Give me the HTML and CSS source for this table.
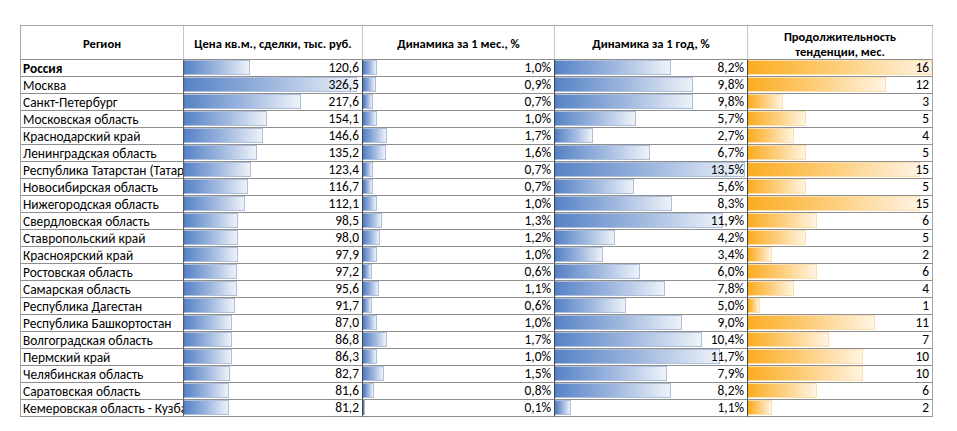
FILE: index.html
```html
<!DOCTYPE html>
<html lang="ru">
<head>
<meta charset="utf-8">
<title>Цены на жильё по регионам</title>
<link rel="stylesheet" href="styles.css">
</head>
<body>
<div class="sheet">
  <div class="cell head">Регион</div>
  <div class="cell head">Цена кв.м., сделки, тыс. руб.</div>
  <div class="cell head">Динамика за 1 мес., %</div>
  <div class="cell head">Динамика за 1 год, %</div>
  <div class="cell head">Продолжительность<br>тенденции, мес.</div>

  <div class="cell name strong">Россия</div>
  <div class="cell val"><span class="bar blue" style="width:66px"></span><span class="num">120,6</span></div>
  <div class="cell val"><span class="bar blue" style="width:14px"></span><span class="num">1,0%</span></div>
  <div class="cell val"><span class="bar blue" style="width:116px"></span><span class="num">8,2%</span></div>
  <div class="cell val last"><span class="bar orange" style="width:184px"></span><span class="num">16</span></div>

  <div class="cell name">Москва</div>
  <div class="cell val"><span class="bar blue" style="width:173px"></span><span class="num">326,5</span></div>
  <div class="cell val"><span class="bar blue" style="width:13px"></span><span class="num">0,9%</span></div>
  <div class="cell val"><span class="bar blue" style="width:138px"></span><span class="num">9,8%</span></div>
  <div class="cell val last"><span class="bar orange" style="width:138px"></span><span class="num">12</span></div>

  <div class="cell name">Санкт-Петербург</div>
  <div class="cell val"><span class="bar blue" style="width:117px"></span><span class="num">217,6</span></div>
  <div class="cell val"><span class="bar blue" style="width:10px"></span><span class="num">0,7%</span></div>
  <div class="cell val"><span class="bar blue" style="width:138px"></span><span class="num">9,8%</span></div>
  <div class="cell val last"><span class="bar orange" style="width:35px"></span><span class="num">3</span></div>

  <div class="cell name">Московская область</div>
  <div class="cell val"><span class="bar blue" style="width:83px"></span><span class="num">154,1</span></div>
  <div class="cell val"><span class="bar blue" style="width:14px"></span><span class="num">1,0%</span></div>
  <div class="cell val"><span class="bar blue" style="width:81px"></span><span class="num">5,7%</span></div>
  <div class="cell val last"><span class="bar orange" style="width:58px"></span><span class="num">5</span></div>

  <div class="cell name">Краснодарский край</div>
  <div class="cell val"><span class="bar blue" style="width:79px"></span><span class="num">146,6</span></div>
  <div class="cell val"><span class="bar blue" style="width:24px"></span><span class="num">1,7%</span></div>
  <div class="cell val"><span class="bar blue" style="width:38px"></span><span class="num">2,7%</span></div>
  <div class="cell val last"><span class="bar orange" style="width:46px"></span><span class="num">4</span></div>

  <div class="cell name">Ленинградская область</div>
  <div class="cell val"><span class="bar blue" style="width:73px"></span><span class="num">135,2</span></div>
  <div class="cell val"><span class="bar blue" style="width:23px"></span><span class="num">1,6%</span></div>
  <div class="cell val"><span class="bar blue" style="width:95px"></span><span class="num">6,7%</span></div>
  <div class="cell val last"><span class="bar orange" style="width:58px"></span><span class="num">5</span></div>

  <div class="cell name">Республика Татарстан (Татарстан)</div>
  <div class="cell val"><span class="bar blue" style="width:67px"></span><span class="num">123,4</span></div>
  <div class="cell val"><span class="bar blue" style="width:10px"></span><span class="num">0,7%</span></div>
  <div class="cell val"><span class="bar blue" style="width:190px"></span><span class="num">13,5%</span></div>
  <div class="cell val last"><span class="bar orange" style="width:172px"></span><span class="num">15</span></div>

  <div class="cell name">Новосибирская область</div>
  <div class="cell val"><span class="bar blue" style="width:64px"></span><span class="num">116,7</span></div>
  <div class="cell val"><span class="bar blue" style="width:10px"></span><span class="num">0,7%</span></div>
  <div class="cell val"><span class="bar blue" style="width:79px"></span><span class="num">5,6%</span></div>
  <div class="cell val last"><span class="bar orange" style="width:58px"></span><span class="num">5</span></div>

  <div class="cell name">Нижегородская область</div>
  <div class="cell val"><span class="bar blue" style="width:61px"></span><span class="num">112,1</span></div>
  <div class="cell val"><span class="bar blue" style="width:14px"></span><span class="num">1,0%</span></div>
  <div class="cell val"><span class="bar blue" style="width:117px"></span><span class="num">8,3%</span></div>
  <div class="cell val last"><span class="bar orange" style="width:172px"></span><span class="num">15</span></div>

  <div class="cell name">Свердловская область</div>
  <div class="cell val"><span class="bar blue" style="width:54px"></span><span class="num">98,5</span></div>
  <div class="cell val"><span class="bar blue" style="width:19px"></span><span class="num">1,3%</span></div>
  <div class="cell val"><span class="bar blue" style="width:168px"></span><span class="num">11,9%</span></div>
  <div class="cell val last"><span class="bar orange" style="width:69px"></span><span class="num">6</span></div>

  <div class="cell name">Ставропольский край</div>
  <div class="cell val"><span class="bar blue" style="width:54px"></span><span class="num">98,0</span></div>
  <div class="cell val"><span class="bar blue" style="width:17px"></span><span class="num">1,2%</span></div>
  <div class="cell val"><span class="bar blue" style="width:60px"></span><span class="num">4,2%</span></div>
  <div class="cell val last"><span class="bar orange" style="width:58px"></span><span class="num">5</span></div>

  <div class="cell name">Красноярский край</div>
  <div class="cell val"><span class="bar blue" style="width:54px"></span><span class="num">97,9</span></div>
  <div class="cell val"><span class="bar blue" style="width:14px"></span><span class="num">1,0%</span></div>
  <div class="cell val"><span class="bar blue" style="width:48px"></span><span class="num">3,4%</span></div>
  <div class="cell val last"><span class="bar orange" style="width:24px"></span><span class="num">2</span></div>

  <div class="cell name">Ростовская область</div>
  <div class="cell val"><span class="bar blue" style="width:53px"></span><span class="num">97,2</span></div>
  <div class="cell val"><span class="bar blue" style="width:9px"></span><span class="num">0,6%</span></div>
  <div class="cell val"><span class="bar blue" style="width:85px"></span><span class="num">6,0%</span></div>
  <div class="cell val last"><span class="bar orange" style="width:69px"></span><span class="num">6</span></div>

  <div class="cell name">Самарская область</div>
  <div class="cell val"><span class="bar blue" style="width:53px"></span><span class="num">95,6</span></div>
  <div class="cell val"><span class="bar blue" style="width:16px"></span><span class="num">1,1%</span></div>
  <div class="cell val"><span class="bar blue" style="width:110px"></span><span class="num">7,8%</span></div>
  <div class="cell val last"><span class="bar orange" style="width:46px"></span><span class="num">4</span></div>

  <div class="cell name">Республика Дагестан</div>
  <div class="cell val"><span class="bar blue" style="width:51px"></span><span class="num">91,7</span></div>
  <div class="cell val"><span class="bar blue" style="width:9px"></span><span class="num">0,6%</span></div>
  <div class="cell val"><span class="bar blue" style="width:71px"></span><span class="num">5,0%</span></div>
  <div class="cell val last"><span class="bar orange" style="width:12px"></span><span class="num">1</span></div>

  <div class="cell name">Республика Башкортостан</div>
  <div class="cell val"><span class="bar blue" style="width:48px"></span><span class="num">87,0</span></div>
  <div class="cell val"><span class="bar blue" style="width:14px"></span><span class="num">1,0%</span></div>
  <div class="cell val"><span class="bar blue" style="width:127px"></span><span class="num">9,0%</span></div>
  <div class="cell val last"><span class="bar orange" style="width:127px"></span><span class="num">11</span></div>

  <div class="cell name">Волгоградская область</div>
  <div class="cell val"><span class="bar blue" style="width:48px"></span><span class="num">86,8</span></div>
  <div class="cell val"><span class="bar blue" style="width:24px"></span><span class="num">1,7%</span></div>
  <div class="cell val"><span class="bar blue" style="width:147px"></span><span class="num">10,4%</span></div>
  <div class="cell val last"><span class="bar orange" style="width:81px"></span><span class="num">7</span></div>

  <div class="cell name">Пермский край</div>
  <div class="cell val"><span class="bar blue" style="width:48px"></span><span class="num">86,3</span></div>
  <div class="cell val"><span class="bar blue" style="width:14px"></span><span class="num">1,0%</span></div>
  <div class="cell val"><span class="bar blue" style="width:165px"></span><span class="num">11,7%</span></div>
  <div class="cell val last"><span class="bar orange" style="width:115px"></span><span class="num">10</span></div>

  <div class="cell name">Челябинская область</div>
  <div class="cell val"><span class="bar blue" style="width:46px"></span><span class="num">82,7</span></div>
  <div class="cell val"><span class="bar blue" style="width:21px"></span><span class="num">1,5%</span></div>
  <div class="cell val"><span class="bar blue" style="width:112px"></span><span class="num">7,9%</span></div>
  <div class="cell val last"><span class="bar orange" style="width:115px"></span><span class="num">10</span></div>

  <div class="cell name">Саратовская область</div>
  <div class="cell val"><span class="bar blue" style="width:45px"></span><span class="num">81,6</span></div>
  <div class="cell val"><span class="bar blue" style="width:11px"></span><span class="num">0,8%</span></div>
  <div class="cell val"><span class="bar blue" style="width:116px"></span><span class="num">8,2%</span></div>
  <div class="cell val last"><span class="bar orange" style="width:69px"></span><span class="num">6</span></div>

  <div class="cell name">Кемеровская область - Кузбасс</div>
  <div class="cell val"><span class="bar blue" style="width:45px"></span><span class="num">81,2</span></div>
  <div class="cell val"><span class="bar blue" style="width:2px"></span><span class="num">0,1%</span></div>
  <div class="cell val"><span class="bar blue" style="width:16px"></span><span class="num">1,1%</span></div>
  <div class="cell val last"><span class="bar orange" style="width:24px"></span><span class="num">2</span></div>
</div>
</body>
</html>
```

FILE: styles.css
```css
html, body {
  margin: 0;
  background: #ffffff;
}

body {
  font-family: Carlito, Lato, "Open Sans", sans-serif;
  color: #000000;
  font-size: 13.4px;
}

.sheet {
  margin: 25px 0 0 20px;
  display: grid;
  grid-template-columns: 163px 179px 192px 193px 185px;
  width: max-content;
  border-top: 1px solid #a6a6a6;
  border-left: 1px solid #a6a6a6;
}

.cell {
  box-sizing: border-box;
  height: 17px;
  border-right: 1px solid #a6a6a6;
  border-bottom: 1px solid #8e8e8e;
  overflow: hidden;
  white-space: nowrap;
}

.head {
  height: 34px;
  padding-top: 3px;
  display: flex;
  align-items: center;
  justify-content: center;
  text-align: center;
  font-weight: bold;
  font-size: 12.6px;
  line-height: 15.5px;
  border-right-color: #c8c8c8;
  border-bottom-color: #8e8e8e;
  white-space: normal;
}

.name {
  padding-left: 2px;
  line-height: 17px;
  border-right-color: #5a5a5a;
}

.strong {
  font-weight: bold;
}

.val {
  display: grid;
  border-right-color: #474747;
}

.val.last {
  border-right-color: #a6a6a6;
}

.val > .bar,
.val > .num {
  grid-area: 1 / 1;
}

.bar {
  box-sizing: border-box;
  justify-self: start;
  align-self: start;
  height: 15px;
}

.blue {
  background: linear-gradient(to right, #5783c6 0%, #9db6de 50%, #eef2f9 100%);
  border: 1px solid #aebfdc;
  border-left-color: #4f7bbf;
}

.orange {
  background: linear-gradient(to right, #fbad22 0%, #fdce7c 50%, #fff4e2 100%);
  border: 1px solid #fde0b0;
  border-left-color: #f8a91e;
}

.num {
  justify-self: end;
  align-self: center;
  padding-right: 3px;
  line-height: 16px;
}
```
